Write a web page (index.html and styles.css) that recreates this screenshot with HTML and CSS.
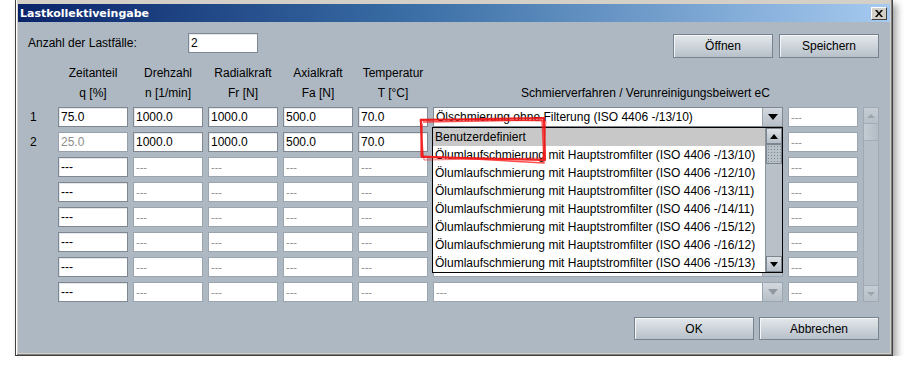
FILE: index.html
```html
<!DOCTYPE html>
<html lang="de">
  <head>
    <meta charset="UTF-8" />
    <title>Lastkollektiveingabe</title>
    <link rel="stylesheet" href="styles.css">
  </head>
  <body>
    <div class="window">
      <div class="titlebar">
        <span class="title">Lastkollektiveingabe</span>
        <span class="close">
          <svg width="8" height="7" viewBox="0 0 8 7"><path d="M0 0h2l2 2.5 2-2.5h2l-3 3.5 3 3.5h-2l-2-2.5-2 2.5h-2l3-3.5z" fill="#000"/></svg>
        </span>
      </div>

      <div class="panel">
        <!-- count + file buttons -->
        <div class="top">
          <label class="count-label">Anzahl der Lastfälle:</label>
          <div class="field edit count">2</div>
          <div class="spacer"></div>
          <div class="btn top-btn">Öffnen</div>
          <div class="btn top-btn">Speichern</div>
        </div>

        <!-- column headers -->
        <div class="head">
          <div></div>
          <div class="h">Zeitanteil</div>
          <div class="h">Drehzahl</div>
          <div class="h">Radialkraft</div>
          <div class="h">Axialkraft</div>
          <div class="h">Temperatur</div>
          <div></div><div></div><div></div>
          <div></div>
          <div class="h">q [%]</div>
          <div class="h">n [1/min]</div>
          <div class="h">Fr [N]</div>
          <div class="h">Fa [N]</div>
          <div class="h">T [°C]</div>
          <div class="h wide">Schmierverfahren / Verunreinigungsbeiwert eC</div>
          <div></div>
        </div>

        <!-- load cases -->
        <div class="grid">
          <div class="num">1</div>
          <div class="field edit">75.0</div>
          <div class="field edit">1000.0</div>
          <div class="field edit">1000.0</div>
          <div class="field edit">500.0</div>
          <div class="field edit">70.0</div>
          <div class="combo edit"><span class="combo-text">Ölschmierung ohne Filterung (ISO 4406 -/13/10)</span><span class="arrow"><i></i></span></div>
          <div class="field off">---</div>
          <div class="vscroll">
            <div class="vs-btn up"><i></i></div>
            <div class="vs-thumb"></div>
            <div class="vs-track"></div>
            <div class="vs-btn down"><i></i></div>
          </div>

          <div class="num">2</div>
          <div class="field soft">25.0</div>
          <div class="field edit">1000.0</div>
          <div class="field edit">1000.0</div>
          <div class="field edit">500.0</div>
          <div class="field edit">70.0</div>
          <div class="combo edit"><span class="combo-text"></span><span class="arrow"><i></i></span></div>
          <div class="field off">---</div>

          <!-- rows 3-7: combo lies under the open popup -->
          <div class="num"></div>
          <div class="field edit">---</div>
          <div class="field off">---</div><div class="field off">---</div><div class="field off">---</div><div class="field off">---</div>
          <div class="combo off"><span class="combo-text"></span><span class="arrow"><i></i></span></div>
          <div class="field off">---</div>

          <div class="num"></div>
          <div class="field edit">---</div>
          <div class="field off">---</div><div class="field off">---</div><div class="field off">---</div><div class="field off">---</div>
          <div class="combo off"><span class="combo-text"></span><span class="arrow"><i></i></span></div>
          <div class="field off">---</div>

          <div class="num"></div>
          <div class="field edit">---</div>
          <div class="field off">---</div><div class="field off">---</div><div class="field off">---</div><div class="field off">---</div>
          <div class="combo off"><span class="combo-text"></span><span class="arrow"><i></i></span></div>
          <div class="field off">---</div>

          <div class="num"></div>
          <div class="field edit">---</div>
          <div class="field off">---</div><div class="field off">---</div><div class="field off">---</div><div class="field off">---</div>
          <div class="combo off"><span class="combo-text"></span><span class="arrow"><i></i></span></div>
          <div class="field off">---</div>

          <div class="num"></div>
          <div class="field edit">---</div>
          <div class="field off">---</div><div class="field off">---</div><div class="field off">---</div><div class="field off">---</div>
          <div class="combo off"><span class="combo-text"></span><span class="arrow"><i></i></span></div>
          <div class="field off">---</div>

          <div class="num"></div>
          <div class="field edit">---</div>
          <div class="field off">---</div><div class="field off">---</div><div class="field off">---</div><div class="field off">---</div>
          <div class="combo off"><span class="combo-text">---</span><span class="arrow"><i></i></span></div>
          <div class="field off">---</div>
        </div>

        <div class="bottom">
          <div class="btn bottom-btn">OK</div>
          <div class="btn bottom-btn">Abbrechen</div>
        </div>

        <!-- open combo popup for row 1 -->
        <div class="popup">
          <div class="items">
            <div class="item sel">Benutzerdefiniert</div>
            <div class="item">Ölumlaufschmierung mit Hauptstromfilter (ISO 4406 -/13/10)</div>
            <div class="item">Ölumlaufschmierung mit Hauptstromfilter (ISO 4406 -/12/10)</div>
            <div class="item">Ölumlaufschmierung mit Hauptstromfilter (ISO 4406 -/13/11)</div>
            <div class="item">Ölumlaufschmierung mit Hauptstromfilter (ISO 4406 -/14/11)</div>
            <div class="item">Ölumlaufschmierung mit Hauptstromfilter (ISO 4406 -/15/12)</div>
            <div class="item">Ölumlaufschmierung mit Hauptstromfilter (ISO 4406 -/16/12)</div>
            <div class="item">Ölumlaufschmierung mit Hauptstromfilter (ISO 4406 -/15/13)</div>
          </div>
          <div class="pscroll">
            <div class="ps-btn up"><i></i></div>
            <div class="ps-thumb"></div>
            <div class="ps-track"></div>
            <div class="ps-btn down"><i></i></div>
          </div>
        </div>

        <!-- hand drawn red marker -->
        <svg class="mark" width="134" height="52" viewBox="0 0 134 52">
          <path d="M3 4 L126 2 L127 44 L4 41 Z" fill="none" stroke="#f01010" stroke-width="2.2" stroke-linejoin="round" opacity="0.9"/>
          <path d="M5 6 L124 4 L126 47 L3 40 L4 8" fill="none" stroke="#ff2020" stroke-width="1.4" opacity="0.8"/>
          <path d="M2 3 L128 5 L125 42 L6 44 Z" fill="none" stroke="#e81818" stroke-width="1" opacity="0.6"/>
        </svg>
      </div>
    </div>
  </body>
</html>
```

FILE: styles.css
```css
body {
  margin: 0;
  background: #fff;
  font-family: "Liberation Sans", Arial, sans-serif;
  font-size: 12px;
  color: #000;
}
.window {
  position: relative;
  width: 878px;
  height: 356px;
  margin-left: 15px;
  box-sizing: border-box;
  background: #d4d0c8;
  border: 1px solid #404040;
  border-top: none;
  padding: 4px 2px 2px 2px;
  display: flex;
  flex-direction: column;
  box-shadow: inset 1px 0 0 #fff, inset -1px -1px 0 #808080, 4px 4px 7px rgba(0, 0, 0, 0.35);
}
.titlebar {
  height: 18px;
  display: flex;
  align-items: center;
  padding: 0 3px 0 2px;
  background: linear-gradient(to right, #0a246a, #3a6ea5 45%, #a6caf0);
}
.title {
  flex: 1;
  color: #fff;
  font-weight: bold;
  font-family: "DejaVu Sans", sans-serif;
  font-size: 11px;
}
.close {
  width: 16px;
  height: 13px;
  box-sizing: border-box;
  background: #d4d0c8;
  border: 1px solid;
  border-color: #fff #404040 #404040 #fff;
  display: flex;
  align-items: center;
  justify-content: center;
}
.panel {
  position: relative;
  flex: 1;
  background: #aeb8c2;
  padding: 11px 11px 0 10px;
}
.top {
  display: flex;
  align-items: flex-start;
  height: 24px;
}
.count-label {
  width: 160px;
  line-height: 20px;
}
.field {
  height: 20px;
  box-sizing: border-box;
  background: #fff;
  border: 1px solid #7f8892;
  padding: 0 2px;
  line-height: 18px;
  white-space: nowrap;
  overflow: hidden;
}
.field.edit {
  box-shadow: inset 1px 1px 0 #e6e9ec;
}
.field.soft {
  border-color: #98a1ab;
  color: #8d8d8d;
}
.field.off {
  border-color: #9ba5af;
  color: #8e8e8e;
  font-size: 11px;
}
.count {
  width: 70px;
}
.spacer {
  flex: 1;
}
.btn {
  box-sizing: border-box;
  display: flex;
  align-items: center;
  justify-content: center;
  border: 1px solid #78828c;
  background: linear-gradient(#e4e8ec, #c9d0d7 60%, #b7c0c9);
  box-shadow: inset 1px 1px 0 #f4f6f8;
}
.top-btn {
  width: 100px;
  height: 24px;
  margin-top: 1px;
  margin-left: 6px;
}
.head {
  display: grid;
  grid-template-columns: 25px repeat(5, 70px) 350px 70px 16px;
  grid-template-rows: 20px 20px;
  column-gap: 5px;
  margin-top: 6px;
}
.h {
  text-align: center;
  line-height: 20px;
  white-space: nowrap;
}
.h.wide {
  grid-column: span 2;
}
.grid {
  display: grid;
  grid-template-columns: 25px repeat(5, 70px) 350px 70px 16px;
  grid-auto-rows: 20px;
  column-gap: 5px;
  row-gap: 5px;
  margin-top: 4px;
}
.num {
  padding-left: 2px;
  line-height: 20px;
}
.combo {
  display: flex;
  height: 20px;
  box-sizing: border-box;
  background: #fff;
  border: 1px solid #7f8892;
}
.combo.off {
  border-color: #9ba5af;
  color: #8e8e8e;
  font-size: 11px;
}
.combo-text {
  flex: 1;
  padding-left: 2px;
  line-height: 18px;
  white-space: nowrap;
  overflow: hidden;
}
.arrow {
  width: 19px;
  display: flex;
  align-items: center;
  justify-content: center;
  background: linear-gradient(#d3d8de, #b7bfc8);
  border-left: 1px solid #9ba5af;
}
.arrow i {
  width: 0;
  height: 0;
  border-left: 5px solid transparent;
  border-right: 5px solid transparent;
  border-top: 6px solid #000;
}
.combo.off .arrow i {
  border-top-color: #9098a0;
}
.vscroll {
  grid-column: 9;
  grid-row: 1 / span 8;
  display: flex;
  flex-direction: column;
  box-sizing: border-box;
  border: 1px solid #a0a9b3;
  background: #b5bec7;
}
.vs-btn {
  height: 15px;
  display: flex;
  align-items: center;
  justify-content: center;
  background: linear-gradient(#c6cdd4, #b6bec7);
  border-bottom: 1px solid #a3adb7;
}
.vs-btn.down {
  border-bottom: none;
  border-top: 1px solid #a3adb7;
}
.vs-btn i {
  width: 0;
  height: 0;
  border-left: 4px solid transparent;
  border-right: 4px solid transparent;
}
.vs-btn.up i {
  border-bottom: 4px solid #9ca4ac;
}
.vs-btn.down i {
  border-top: 4px solid #9ca4ac;
}
.vs-thumb {
  height: 16px;
  background: linear-gradient(to right, #c4cbd2, #b3bcc5);
  border-bottom: 1px solid #a3adb7;
}
.vs-track {
  flex: 1;
}
.bottom {
  display: flex;
  justify-content: flex-end;
  gap: 5px;
  margin-top: 15px;
}
.bottom-btn {
  width: 120px;
  height: 23px;
}
.popup {
  position: absolute;
  left: 414px;
  top: 105px;
  width: 351px;
  height: 146px;
  box-sizing: border-box;
  border: 1px solid #000;
  background: #fff;
  display: flex;
}
.items {
  flex: 1;
  overflow: hidden;
}
.item {
  height: 18px;
  line-height: 18px;
  padding-left: 2px;
  white-space: nowrap;
}
.item.sel {
  background: #c8c8c8;
}
.pscroll {
  width: 16px;
  display: flex;
  flex-direction: column;
  background: #b9c0c8;
  border-left: 1px solid #8a939c;
}
.ps-btn {
  height: 16px;
  display: flex;
  align-items: center;
  justify-content: center;
  background: linear-gradient(#dde1e6, #b6bec7);
  border: 1px solid #7d8690;
  box-sizing: border-box;
}
.ps-btn i {
  width: 0;
  height: 0;
  border-left: 4px solid transparent;
  border-right: 4px solid transparent;
}
.ps-btn.up i {
  border-bottom: 5px solid #000;
}
.ps-btn.down i {
  border-top: 5px solid #000;
}
.ps-thumb {
  height: 20px;
  box-sizing: border-box;
  border: 1px solid #7d8690;
  background-color: #b8c0c8;
  background-image: radial-gradient(#7f8891 0.8px, transparent 1px);
  background-size: 3px 3px;
}
.ps-track {
  flex: 1;
}
.mark {
  position: absolute;
  left: 400px;
  top: 94px;
}
```
